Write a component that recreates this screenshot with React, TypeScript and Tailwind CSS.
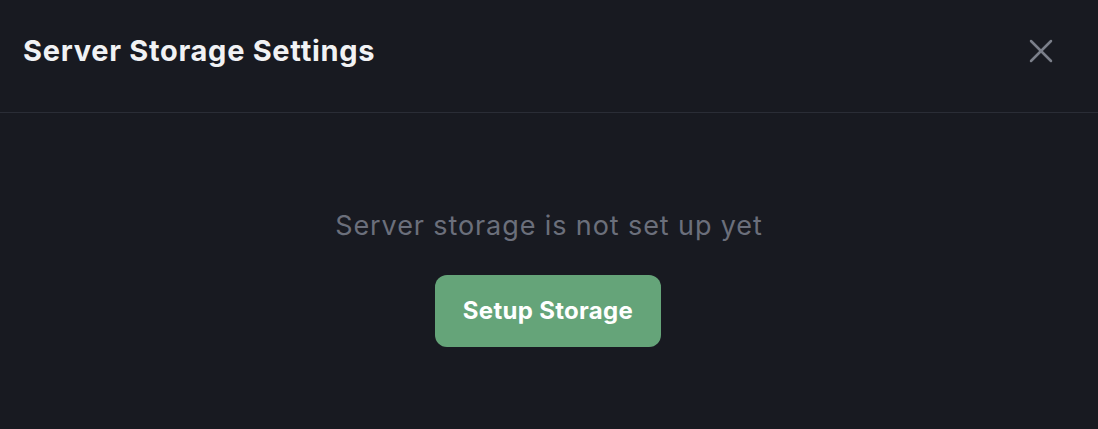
import { X } from "lucide-react";

export default function App() {
  return (
    <div className="w-[1098px] h-[429px] bg-[#181a21] font-['Inter',sans-serif] overflow-hidden">
      <div className="h-[113px] flex items-center justify-between pl-[23px] pr-6 pb-[10px] border-b border-[#2a2d36]">
        <h1 className="text-[29px] leading-[36px] font-bold tracking-[0.7px] text-[#f1f2f4]">Server Storage Settings</h1>
        <button className="mr-[13px] text-[#7b7f8a]">
          <X size={40} strokeWidth={1.5} />
        </button>
      </div>
      <div className="flex flex-col items-center pt-[97px]">
        <p className="text-[27px] leading-[32px] tracking-[0.9px] text-[#6b6f7b]">Server storage is not set up yet</p>
        <button className="mt-[33px] ml-[-2px] h-[72px] w-[226px] rounded-[12px] bg-[#65a479] text-white text-[24px] font-bold tracking-[0.3px]">
          Setup Storage
        </button>
      </div>
    </div>
  );
}
